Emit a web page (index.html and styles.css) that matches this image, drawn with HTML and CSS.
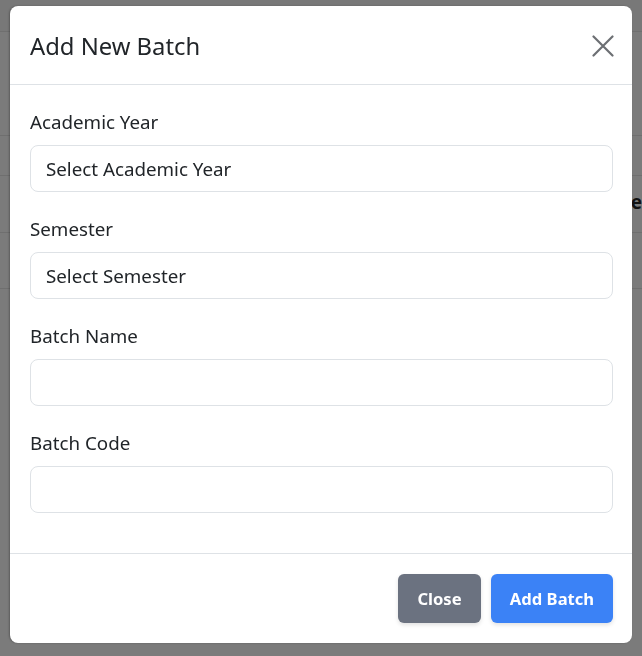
FILE: index.html
```html
<!DOCTYPE html>
<html lang="en">
<head>
<meta charset="utf-8">
<title>Add New Batch</title>
<link rel="stylesheet" href="styles.css">
</head>
<body>
<div class="page">
  <div class="row row-top"></div>
  <div class="row row-a"></div>
  <div class="row row-b"></div>
  <div class="row row-c"><span class="th">Name</span></div>
  <div class="row row-d"></div>
  <div class="row row-e"></div>
</div>

<div class="modal" role="dialog">
  <div class="modal-header">
    <h2 class="modal-title">Add New Batch</h2>
    <button class="btn-close" type="button" aria-label="Close">
      <svg width="22" height="22" viewBox="0 0 22 22"><path d="M1.5 1.5 L20.5 20.5 M20.5 1.5 L1.5 20.5" stroke="#6c6f73" stroke-width="2.2" stroke-linecap="round" fill="none"/></svg>
    </button>
  </div>
  <div class="modal-body">
    <div class="group">
      <label class="label">Academic Year</label>
      <div class="field">Select Academic Year</div>
    </div>
    <div class="group">
      <label class="label">Semester</label>
      <div class="field">Select Semester</div>
    </div>
    <div class="group">
      <label class="label">Batch Name</label>
      <div class="field"></div>
    </div>
    <div class="group">
      <label class="label">Batch Code</label>
      <div class="field"></div>
    </div>
  </div>
  <div class="modal-footer">
    <button class="btn btn-gray" type="button">Close</button>
    <button class="btn btn-blue" type="button">Add Batch</button>
  </div>
</div>
</body>
</html>
```
FILE: styles.css
```css
* { box-sizing: border-box; }
html, body { margin: 0; padding: 0; }
body {
  background: #7a7a7a;
  font-family: "Noto Sans", "Open Sans", sans-serif;
  color: #212529;
  width: 642px;
  height: 656px;
  overflow: hidden;
}
.page { display: flex; flex-direction: column; }
.row { border-bottom: 1px solid #6f6f6f; background: #7b7b7b; }
.row-top { height: 32px; background: #787878; }
.row-a { height: 104px; }
.row-b { height: 40px; }
.row-c { height: 57px; display: flex; justify-content: flex-end; align-items: center; }
.row-d { height: 56px; }
.row-e { height: 367px; border-bottom: none; }
.th { font-weight: 700; font-size: 19px; color: #111; margin-right: 0; padding-bottom: 5px; }

.modal {
  position: fixed;
  top: 6px;
  left: 10px;
  width: 622px;
  height: 637px;
  background: #fff;
  border-radius: 8px;
  box-shadow: -1px 0 2px rgba(0,0,0,0.25);
  display: flex;
  flex-direction: column;
}
.modal-header {
  height: 79px;
  padding: 2px 18px 0 20px;
  border-bottom: 1px solid #dee2e6;
  display: flex;
  align-items: center;
  justify-content: space-between;
}
.modal-title {
  margin: 0;
  font-size: 23.8px;
  font-weight: 400;
  color: #212529;
  line-height: 1.2;
}
.btn-close {
  border: 0;
  background: none;
  padding: 0;
  width: 22px;
  height: 22px;
  display: flex;
}
.modal-body {
  padding: 23px 19px 16px 20px;
  flex: 1;
  border-bottom: 1px solid #dee2e6;
}
.group { margin-bottom: 23px; }
.group:last-child { margin-bottom: 23px; }
.label {
  display: block;
  font-size: 18.75px;
  line-height: 27px;
  color: #212529;
  margin-bottom: 10px;
}
.field {
  height: 47px;
  border: 1px solid #dee2e6;
  border-radius: 8px;
  padding: 0 15px;
  font-size: 18.75px;
  line-height: 45px;
  color: #212529;
}
.modal-footer {
  padding: 20px 19px 20px 20px;
  display: flex;
  justify-content: flex-end;
  gap: 10px;
}
.btn {
  height: 49px;
  border: 0;
  border-radius: 6px;
  color: #fff;
  font-family: "Noto Sans", "Open Sans", sans-serif;
  font-size: 16.6px;
  font-weight: 700;
  padding: 0;
  white-space: nowrap;
  box-shadow: 0 2px 4px rgba(0,0,0,0.12);
}
.btn-gray { background: #6b7280; width: 83px; }
.btn-blue { background: #3b82f6; width: 122px; }
```
